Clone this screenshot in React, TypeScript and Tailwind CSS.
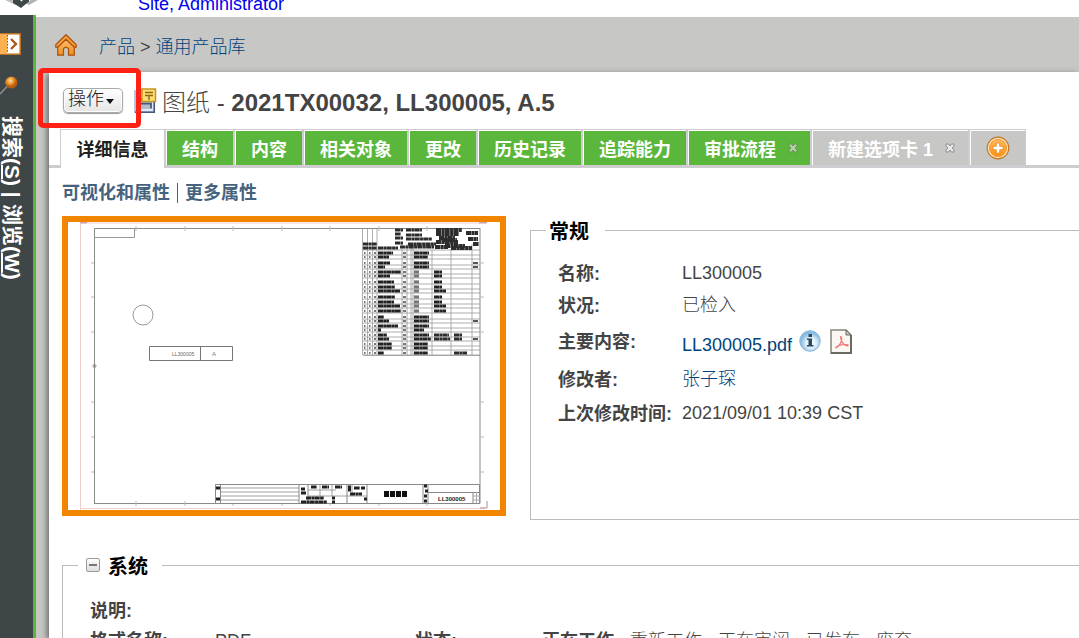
import React from "react";

const fonts = "font-['Liberation_Sans','Noto_Sans_CJK_SC',sans-serif]";

function HomeIcon() {
  return (
    <svg viewBox="0 0 22 22" className="size-[22px]" aria-hidden="true">
      <defs>
        <linearGradient id="home" x1="0" y1="0" x2="0" y2="1">
          <stop offset="0" stopColor="#ffc87c" />
          <stop offset="1" stopColor="#ee8c1e" />
        </linearGradient>
      </defs>
      <path d="M2.700 9.500v11.700h5.800v-6.500q2.500-2.500 5 0v6.500h5.800V9.500L11 2.500z" fill="url(#home)" stroke="#a9520f" strokeWidth="1.200" />
      <path d="M11 .8.8 10.600v2.600h1.800L11 5.200l8.400 8h1.800v-2.600z" fill="#f7a03a" stroke="#a84d10" strokeWidth="1.200" strokeLinejoin="round" />
    </svg>
  );
}

function ExpandIcon() {
  return (
    <svg viewBox="0 0 21 22" className="h-[22px] w-[21px]" aria-hidden="true">
      <rect x="-2" y=".8" width="22.200" height="20.400" fill="#fff" stroke="#c1701c" strokeWidth="1.500" />
      <rect x="0" y="1.500" width="7.500" height="19" fill="#fbb14f" />
      <path d="M7.500 2v18" stroke="#8a5a26" strokeDasharray="1.500 1.500" />
      <path d="M11 6l5 5-5 5" fill="none" stroke="#a95712" strokeWidth="2.300" />
    </svg>
  );
}

function PinIcon() {
  return (
    <svg viewBox="0 0 18 20" className="h-5 w-[18px]" aria-hidden="true">
      <defs>
        <radialGradient id="pin" cx=".4" cy=".35">
          <stop offset="0" stopColor="#ffe2ad" />
          <stop offset=".45" stopColor="#f4a33e" />
          <stop offset="1" stopColor="#b65a0d" />
        </radialGradient>
      </defs>
      <path d="M0 19 7.500 11" stroke="#8f9494" strokeWidth="1.500" />
      <path d="M5 8.500 9 13l4-1-7-8z" fill="#c46f1b" />
      <circle cx="11.500" cy="7.500" r="6" fill="url(#pin)" />
    </svg>
  );
}

function DrawingIcon() {
  return (
    <svg viewBox="0 0 23 26" className="h-[26px] w-[23px]" aria-hidden="true">
      <rect x="1" y="3" width="19" height="21" fill="#dfeaf5" stroke="#9fb8d6" strokeWidth="1.500" />
      <path d="M20.300 12v12.200H1" fill="none" stroke="#46597c" strokeWidth="1.500" />
      <path d="M5 16h11.500v5H5z" fill="#b6bccb" />
      <path d="M5 15.500h12v5M5 11.500h3" fill="none" stroke="#46597c" strokeWidth="1.800" />
      <rect x="8" y="1" width="13.500" height="12.500" fill="#fbdc76" stroke="#c59520" strokeWidth="1.500" />
      <path d="M11 4.500h8M11 7.500h8M15 7.500V12" stroke="#8d6a10" strokeWidth="1.400" />
    </svg>
  );
}

function AddIcon() {
  return (
    <svg viewBox="0 0 24 24" className="size-6" aria-hidden="true">
      <defs>
        <linearGradient id="add" x1="0" y1="0" x2="0" y2="1">
          <stop offset="0" stopColor="#ffb95c" />
          <stop offset="1" stopColor="#ff9010" />
        </linearGradient>
      </defs>
      <circle cx="12" cy="12" r="10.800" fill="#ffe9c4" stroke="#c27a2a" strokeWidth="1.200" />
      <circle cx="12" cy="12" r="8.600" fill="url(#add)" stroke="#f09a35" />
      <path d="M10.300 7h3.400v3.300H17v3.400h-3.300V17h-3.400v-3.300H7v-3.400h3.300z" fill="#fff" stroke="#e08a2a" strokeWidth=".8" />
    </svg>
  );
}

function InfoIcon() {
  return (
    <svg viewBox="0 0 22 22" className="size-[22px]" aria-hidden="true">
      <defs>
        <radialGradient id="info" cx=".55" cy=".6">
          <stop offset="0" stopColor="#fff" />
          <stop offset=".5" stopColor="#dceffb" />
          <stop offset="1" stopColor="#86bade" />
        </radialGradient>
      </defs>
      <circle cx="11" cy="11" r="10.300" fill="url(#info)" stroke="#8db9d8" />
      <path d="M9.500 4h3.500v3H9.500zM8 8.500h5v6.500h1.500v1.500H8V15h1.500v-5H8z" fill="#264b60" />
    </svg>
  );
}

function PdfIcon() {
  return (
    <svg viewBox="0 0 22 25" className="h-[25px] w-[22px]" aria-hidden="true">
      <path d="M1 1h15l5 5v18H1z" fill="#faf7f2" stroke="#84867a" strokeWidth="1.500" />
      <path d="M21 6v18H1" fill="none" stroke="#555b4c" strokeWidth="1.500" />
      <path d="M16 1v5h5z" fill="#c9cabc" stroke="#67695c" />
      <path d="M10.500 7.500c1.500 0 1.300 3 .9 4.500-.8 3-3.700 6.500-5.400 7-1.500-.8 4-3.700 10.800-3.500 2 .2 1.700 1.700 0 1.300-3.300-.8-6-4.700-6.300-9.300z" fill="none" stroke="#f0767c" strokeWidth="1.200" />
    </svg>
  );
}

function CloseIcon({ light = false }: { light?: boolean }) {
  return (
    <svg viewBox="0 0 10 10" className="size-[10px]" aria-hidden="true">
      <path d="M1 1h2.500L5 3l1.500-2H9v2L7 5l2 2v2H6.500L5 7 3.500 9H1V7l2-2-2-2z" fill={light ? "#b5cfa9" : "#e8e8e8"} stroke={light ? "#648f52" : "#888888"} strokeWidth=".9" />
    </svg>
  );
}

const partRows = [
  [31, 45, 45], [35, 32, 42], [41, 36, 45], [45, 20, 45], [50, 68, 14],
  [54, 36, 14], [60, 48, 14], [65, 50, 14], [69, 65, 14], [75, 50, 14],
  [80, 48, 14], [84, 65, 14], [89, 70, 14], [95, 18, 45], [99, 34, 45],
  [104, 60, 45], [108, 10, 30], [113, 28, 45], [117, 32, 50], [122, 42, 42],
  [126, 42, 42], [131, 18, 42],
];

function DrawingPreview() {
  return (
    <svg viewBox="0 0 432 288" className="block w-full" role="img" aria-label="LL300005">
      <g fill="none">
        <path d="M12.500 288V1H418M12 286.500h405" stroke="#f0cfca" />
        <path d="M12 .8h7M411 .8h8M412 286h7v-7" stroke="#b98a90" />
        <path d="M26.500 282V6.500H412M26 281.500h386V6" stroke="#8a8a8a" />
        <path d="M26 15.500h40.500V7" stroke="#999" />
        <path d="M68 4v5M117 4v5M165 4v5M214 4v5M262 4v5M311 4v5M359 4v5M68 279v5M117 279v5M165 279v5M214 279v5M262 279v5M311 279v5M359 279v5M23 41h3M23 75h3M23 110h3M23 180h3M23 215h3M23 250h3M412 41h4M412 75h4M412 110h4M412 180h4M412 215h4M412 250h4" stroke="#bbb" />
        <circle cx="75" cy="93" r="10" stroke="#999" />
        <path d="M81.500 124.500h83v14h-83zM132.500 125v14" stroke="#777" />
        <circle cx="26.500" cy="144" r="1.500" stroke="#a8837a" />
      </g>
      <text x="104" y="134" fontSize="5" fill="#666" className="font-['Liberation_Sans']">LL300005</text>
      <text x="144" y="134" fontSize="6" fill="#777" className="font-['Liberation_Sans']">A</text>

      <g stroke="#999" strokeWidth=".8" fill="none">
        <path d="M294.500 7v126M299.500 7v126M304.500 7v126M309 7v126M334 22v111M339 22v111M343 22v111M345 22v111M364 28v105M383 28v105M404 22v111M295 28h117M295 133.500h117" />
        {partRows.map(([y]) => <path key={y} d={`M295 ${y + 2}h117`} />)}
      </g>
      {partRows.map(([y, name, code], index) => (
        <g key={y} stroke="#222" strokeWidth="3.200" strokeDasharray="5 .3 3 .2">
          <path d={`M296 ${y}h1.500M301 ${y}h1.500M306 ${y}h2M335 ${y}h3`} stroke="#777" strokeWidth="2" />
          <path d={`M310 ${y}h${Math.round(name / 3)}`} />
          <path d={`M346 ${y}h${Math.round(code / 3)}`} stroke={code === 14 ? "#777" : "#222"} />
          {code === 14 && <path d={`M366 ${y}h${index === 8 || index > 10 ? 12 : 8}`} />}
          {(index === 2 || index === 3 || index === 14 || index === 18) && <path d={`M405 ${y}h5`} strokeWidth="2" stroke="#555" />}
        </g>
      ))}
      <g stroke="#2c2c2c" strokeDasharray="5 .4 3 .3" strokeWidth="3.200">
        <path d="M295 22h14M295 26h14M310 26h20M327 8h8M338 8h16M327 12h6M338 13h16M327 16h8M338 17h26M327 21h8M332 25h34M340 22h28" />
        <path d="M368 8h26M368 12h23M371 16h16M368 20h22M377 24h20M367 25h13M398 11h12M400 17h10M405 22h6M383 26h21M374 18h15" strokeWidth="4" />
        <path d="M366 113h15M386 113h8M366 117h16M386 117h8M386 131h13" />
      </g>

      <g fill="#fff" stroke="#888">
        <path d="M147.500 262.500h264v19h-264zM152.500 262v20M231 262v20M240 262v20M279 262v20M299 262v20M355 262v20M360 262v20M405 270v12M360 270.500h51" />
        <path d="M153 266h78M153 270h78M153 274h78M153 278h78M240 268h28M240 274h59M252 262v12M264 262v12M284 262v12" strokeWidth=".8" />
      </g>
      <path d="M148 266h4M148 277h4M233 267h4M233 271h5M243 265h6M254 265h7M267 265h7M280 265h3M280 268h3M286 266h6M293 266h4M282 272h12M264 276h3M264 280h3M296 277h3M356 264h3M357 269h3M356 274h3M356 279h3M238 276h18M233 280h26" stroke="#222" strokeWidth="3.200" strokeDasharray="5 .4 3 .3" />
      <path d="M316 272h24" stroke="#111" strokeWidth="6" strokeDasharray="5 1" />
      <text x="370" y="279" fontSize="6" fill="#222" fontWeight="bold" className="font-['Liberation_Sans']">LL300005</text>
      <path d="M405 274h7M405 278h7M408.500 270v11" stroke="#aaa" />
    </svg>
  );
}

const tabs = [
  { label: "结构" },
  { label: "内容" },
  { label: "相关对象" },
  { label: "更改" },
  { label: "历史记录" },
  { label: "追踪能力" },
];

const tabFrame = "flex h-[39px] shrink-0 border-t border-b-[3px] border-l-2 border-[#cdcdcf] bg-white pt-px pl-px";

function Tabs() {
  return (
    <nav className="flex h-[39px] text-lg font-bold text-white">
      <div className="w-[11px] shrink-0 border-b-[3px] border-[#cdcdcf]" />
      <button className="w-[104px] shrink-0 border-t border-l border-[#cdcdcf] bg-white pt-0.5 text-[#222]">详细信息</button>
      {tabs.map((tab) => (
        <div key={tab.label} className={tabFrame}>
          <button className="bg-[#5bb73b] px-[15px] pt-[3px]">{tab.label}</button>
        </div>
      ))}
      <div className={tabFrame}>
        <div className="flex items-center gap-3 bg-[#5bb73b] pr-3 pl-[15px]">
          <button className="pt-[3px]">审批流程</button>
          <button aria-label="关闭审批流程"><CloseIcon light /></button>
        </div>
      </div>
      <div className={tabFrame}>
        <div className="flex items-center gap-3 bg-[#c7c7c5] pr-[13px] pl-[15px]">
          <button className="pt-[3px]">新建选项卡 1</button>
          <button aria-label="关闭新建选项卡 1"><CloseIcon /></button>
        </div>
      </div>
      <div className={"border-r " + tabFrame}>
        <button aria-label="添加选项卡" className="flex w-[54px] items-center justify-center bg-[#c7c7c5]"><AddIcon /></button>
      </div>
      <div className="grow border-b-[3px] border-[#cdcdcf]" />
    </nav>
  );
}

function Sidebar() {
  return (
    <aside className="flex w-9 shrink-0 flex-col items-start border-r-[3px] border-[#5bb73b] bg-[#3e4647] pt-[18px]">
      <button aria-label="展开"><ExpandIcon /></button>
      <button aria-label="固定" className="mt-5"><PinIcon /></button>
      <div className="mt-[21px] flex w-6 items-center text-[21px] leading-6 font-bold whitespace-pre text-white [text-orientation:sideways] [writing-mode:vertical-rl]">
        <a href="#search">搜索(<u>S</u>)</a>
        <span> | </span>
        <a href="#browse">浏览(<u>W</u>)</a>
      </div>
    </aside>
  );
}

function Row({ label, className, children }: { label: string; className: string; children: React.ReactNode }) {
  return (
    <div className={"flex items-center " + className}>
      <dt className="w-[124px] shrink-0 pt-0.5 font-bold whitespace-nowrap">{label}</dt>
      <dd className="flex items-center font-light">{children}</dd>
    </div>
  );
}

export default function App() {
  return (
    <div className={"flex h-screen flex-col overflow-hidden bg-white text-lg leading-6 text-[#444] " + fonts}>
      <header className="flex h-[15px] shrink-0 items-end overflow-hidden">
        <svg viewBox="0 0 38 15" className="h-[15px] w-[38px] shrink-0 self-start" aria-hidden="true">
          <path d="M5 0h7l6 4-2 1z" fill="#b9bcbd" />
          <path d="M31 0h7l-9 5-4-2z" fill="#b0b4b5" />
          <path d="M13 0h7l1.500 1.500L23 0h6v1.500L21 8l-8-5z" fill="#3f494a" />
          <path d="M12 4l9 4 7-4-7 4z" fill="#5d6566" />
        </svg>
        <a href="#user" className="ml-[100px] leading-[22px] whitespace-nowrap text-[#0000ee]">Site, Administrator</a>
      </header>

      <div className="flex min-h-0 grow">
        <Sidebar />
        <main className="flex min-w-0 grow flex-col border-t-2 border-white bg-[#c7c7c5]">
          <nav className="flex h-[55px] shrink-0 items-center pl-[19px]">
            <a href="#home" aria-label="主页"><HomeIcon /></a>
            <div className="ml-[22px] flex items-center gap-[5px] pt-1 font-light text-[#00437c]">
              <a href="#products">产品</a>
              <span className="text-[#444]">&gt;</span>
              <a href="#library">通用产品库</a>
            </div>
          </nav>

          <div className="ml-[13px] min-h-0 grow bg-white shadow-[-2px_2px_6px_#666]">
            <div className="relative flex h-[57px] items-center pl-[14px]">
              <button className="flex h-[25px] w-[60px] items-center justify-center gap-px rounded-[5px] border border-[#aaa] bg-linear-to-b from-white to-[#e5e5e5] pr-[3px] pb-1 font-light text-[#222] shadow-[inset_0_0_0_1px_white,0_1px_1px_#999]">
                操作
                <svg viewBox="0 0 10 6" className="mt-1.5 h-[6px] w-[10px]" aria-hidden="true"><path d="M1 0h8L5 5z" fill="#111" /></svg>
              </button>
              <div className="ml-[11px]"><DrawingIcon /></div>
              <h1 className="ml-[5px] pt-1 text-2xl leading-8 font-light whitespace-nowrap">图纸 - <span className="font-bold">2021TX00032, LL300005, A.5</span></h1>
              <div className="pointer-events-none absolute -top-1 -left-[11px] h-[60px] w-[103px] rounded-[5px] border-[5px] border-[#ff2113]" />
            </div>

            <Tabs />

            <nav className="flex h-12 items-center gap-[7px] pt-0.5 pl-[13px] font-bold text-[#46637e]">
              <a href="#visual">可视化和属性</a>
              <span className="h-5 w-px bg-[#46637e]" />
              <a href="#attributes">更多属性</a>
            </nav>

            <div className="flex gap-6 pl-[13px]">
              <a href="#drawing" className="block w-[444px] shrink-0 self-start border-[6px] border-[#f28500]"><DrawingPreview /></a>
              <fieldset className="min-h-[304px] min-w-0 grow border border-r-0 border-[#bbb] pl-[27px]">
                <legend className="-ml-3 pt-1 pr-4 pl-[3px] text-xl leading-6 font-bold text-black">常规</legend>
                <dl className="pt-[13px]">
                  <Row label="名称:" className="h-[32px]">LL300005</Row>
                  <Row label="状况:" className="h-[32px]">已检入</Row>
                  <Row label="主要内容:" className="h-10">
                    <a href="#pdf" className="mt-2 text-[#00437c]">LL300005.pdf</a>
                    <button aria-label="信息" className="ml-[7px]"><InfoIcon /></button>
                    <a href="#open" aria-label="打开 PDF" className="ml-[9px]"><PdfIcon /></a>
                  </Row>
                  <Row label="修改者:" className="h-[36px]"><a href="#modifier" className="text-[#00437c]">张子琛</a></Row>
                  <Row label="上次修改时间:" className="h-[32px]">2021/09/01 10:39 CST</Row>
                </dl>
              </fieldset>
            </div>

            <fieldset className="mt-[31px] ml-[13px] border border-r-0 border-[#bbb] pb-4 pl-[27px]">
              <legend className="-ml-3 flex items-center gap-2 pr-[14px] pl-2 text-xl leading-6 font-bold text-black">
                <button aria-label="折叠系统" className="flex size-[14px] items-center justify-center rounded-[2px] border border-[#999] bg-linear-to-b from-white to-[#ddd]">
                  <span className="h-[2px] w-2 bg-[#777]" />
                </button>
                <span className="pt-1">系统</span>
              </legend>
              <dl className="pt-4 font-light whitespace-nowrap">
                <Row label="说明:" className="h-[30px]">{null}</Row>
                <div className="flex h-[30px] items-center pt-0.5">
                  <dt className="w-[125px] shrink-0 font-bold">格式名称:</dt>
                  <dd className="w-[200px] shrink-0">PDF</dd>
                  <dt className="w-[127px] shrink-0 font-bold">状态:</dt>
                  <dd className="flex gap-4">
                    <span className="font-bold">正在工作</span><span>重新工作</span><span>正在审阅</span><span>已发布</span><span>废弃</span>
                  </dd>
                </div>
              </dl>
            </fieldset>
          </div>
        </main>
      </div>
    </div>
  );
}
